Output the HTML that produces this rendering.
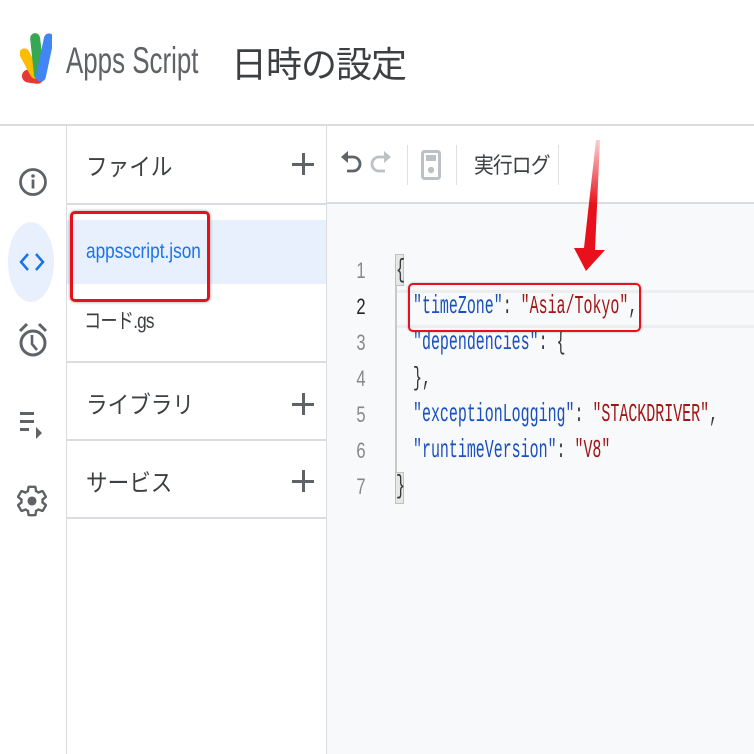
<!DOCTYPE html>
<html><head><meta charset="utf-8"><style>
body{margin:0;width:754px;height:754px;overflow:hidden;background:#fff;font-family:"Liberation Sans","Noto Sans CJK JP",sans-serif;color:#3c4043;position:relative}
.a{position:absolute}
.n{transform-origin:0 0;white-space:nowrap}
.code{font-family:"Liberation Mono",monospace;font-size:26px;transform:scaleX(0.575);transform-origin:0 0;white-space:pre;position:absolute;left:413px}
.k{color:#1a4fbf}.s{color:#a31515}.p{color:#333}
.ln{position:absolute;left:353px;width:16px;text-align:center;font-family:"Liberation Sans",sans-serif;font-size:22px;color:#888;transform:scaleX(0.75)}
.plus{position:absolute;left:292px;width:22px;height:22px}
.plus:before,.plus:after{content:"";position:absolute;background:#5f6368}
.plus:before{left:10px;top:0;width:2.5px;height:22px}
.plus:after{top:10px;left:0;height:2.5px;width:22px}
</style></head><body>
<svg class="a" style="left:20px;top:30px" width="32" height="56" viewBox="0 0 32 56">
<rect x="2" y="40" width="22" height="13" rx="6.5" fill="#e53935" transform="rotate(8 12 46)"/>
<rect x="5" y="17" width="10" height="33" rx="5" fill="#fbbc04" transform="rotate(-28 10 34)"/>
<rect x="12" y="3" width="10" height="47" rx="5" fill="#34a853" transform="rotate(-6 17 26)"/>
<rect x="20" y="3" width="10" height="49" rx="5" fill="#4285f4" transform="rotate(12 25 27)"/>
</svg>
<div class="a n" style="left:66px;top:40px;font-size:37px;color:#5f6368;transform:scaleX(0.7)">Apps Script</div>
<div class="a" style="left:231px;top:36px;font-size:36px;color:#3c4043;letter-spacing:-1px">日時の設定</div>
<div class="a" style="left:0;top:124px;width:754px;height:2px;background:#dadce0"></div>
<div class="a" style="left:66px;top:126px;width:1px;height:628px;background:#dadce0"></div>
<svg class="a" style="left:17px;top:166px" width="32" height="32"><circle cx="16" cy="16" r="12.5" fill="none" stroke="#5f6368" stroke-width="2.8"/><rect x="14.6" y="13.5" width="2.8" height="9" fill="#5f6368"/><circle cx="16" cy="10" r="1.8" fill="#5f6368"/></svg>
<div class="a" style="left:8px;top:222px;width:46px;height:80px;border-radius:23px/40px;background:#e8f0fe"></div>
<svg class="a" style="left:18px;top:250px" width="28" height="24"><path d="M10 4 L3 12 L10 20 M18 4 L25 12 L18 20" fill="none" stroke="#1a73e8" stroke-width="2.5"/></svg>
<svg class="a" style="left:16px;top:320px" width="34" height="42"><circle cx="17" cy="23" r="12" fill="none" stroke="#5f6368" stroke-width="3"/><path d="M16 15 V24 L21 30" fill="none" stroke="#5f6368" stroke-width="2.6"/><path d="M4 11 L11 4 M30 11 L23 4" stroke="#5f6368" stroke-width="3"/></svg>
<svg class="a" style="left:20px;top:410px" width="26" height="32"><rect x="0" y="2" width="14" height="3" fill="#5f6368"/><rect x="0" y="10" width="14" height="3" fill="#5f6368"/><rect x="0" y="18" width="9" height="3" fill="#5f6368"/><path d="M16 17 L22 23 L16 29Z" fill="#5f6368"/></svg>
<svg class="a" style="left:15px;top:482px" width="34" height="38" viewBox="0 0 24 24"><path fill="none" stroke="#5f6368" stroke-width="1.7" d="M19.4 13c.04-.3.1-.7.1-1s-.03-.7-.07-1l2.1-1.65c.2-.15.25-.42.12-.64l-2-3.46a.5.5 0 00-.6-.22l-2.5 1c-.52-.4-1.080-.73-1.7-.98l-.37-2.65A.5.5 0 0014 2h-4a.5.5 0 00-.5.42l-.37 2.65c-.6.25-1.17.59-1.7.98l-2.5-1a.5.5 0 00-.6.22l-2 3.46c-.13.22-.07.49.12.64L4.57 11c-.04.3-.07.65-.07 1s.03.7.07 1l-2.1 1.65c-.2.15-.25.42-.12.64l2 3.46c.12.22.39.3.6.22l2.5-1c.52.4 1.08.73 1.7.98l.37 2.65c.04.24.25.42.5.42h4c.25 0 .46-.18.5-.42l.37-2.65c.6-.25 1.17-.59 1.7-.98l2.5 1c.23.09.48 0 .6-.22l2-3.46c.12-.22.07-.49-.12-.64L19.4 13z"/><circle cx="12" cy="12" r="3.2" fill="#5f6368"/></svg>
<div class="a" style="left:326px;top:126px;width:1px;height:628px;background:#dadce0"></div>
<div class="a n" style="left:86px;top:147px;font-size:24px;color:#3c4043;transform:scaleX(0.9)">ファイル</div>
<div class="plus" style="top:153px"></div>
<div class="a" style="left:67px;top:203px;width:259px;height:2px;background:#dadce0"></div>
<div class="a" style="left:67px;top:220px;width:259px;height:64px;background:#e8f0fe"></div>
<div class="a n" style="left:86px;top:240px;font-size:21px;color:#1a73e8;transform:scaleX(0.82)">appsscript.json</div>
<div class="a" style="left:70px;top:211px;width:134px;height:85px;border:3px solid #e8101a;border-radius:5px;box-shadow:0 0 3px rgba(0,0,0,.4)"></div>
<div class="a n" style="left:84px;top:305px;font-size:21px;color:#3c4043;transform:scaleX(0.82);letter-spacing:-1px">コード.gs</div>
<div class="a" style="left:67px;top:361px;width:259px;height:2px;background:#dadce0"></div>
<div class="a n" style="left:86px;top:385px;font-size:24px;transform:scaleX(0.9)">ライブラリ</div>
<div class="plus" style="top:393px"></div>
<div class="a" style="left:67px;top:439px;width:259px;height:2px;background:#dadce0"></div>
<div class="a n" style="left:86px;top:463px;font-size:24px;transform:scaleX(0.9)">サービス</div>
<div class="plus" style="top:470px"></div>
<div class="a" style="left:67px;top:517px;width:259px;height:2px;background:#dadce0"></div>
<svg class="a" style="left:338px;top:148px" width="56" height="32"><path d="M8 9 H15 A7 7 0 0 1 15 23 H9" fill="none" stroke="#5f6368" stroke-width="2.8"/><path d="M3 9 L10 3 V15Z" fill="#5f6368"/><path d="M48 9 H41 A7 7 0 0 0 41 23 H47" fill="none" stroke="#bdc1c6" stroke-width="2.8"/><path d="M53 9 L46 3 V15Z" fill="#bdc1c6"/></svg>
<div class="a" style="left:407px;top:145px;width:1px;height:40px;background:#e0e0e0"></div>
<svg class="a" style="left:421px;top:150px" width="22" height="32"><rect x="1.5" y="1.5" width="17" height="27" rx="2" fill="none" stroke="#bdc1c6" stroke-width="3"/><circle cx="10" cy="20" r="3.2" fill="#bdc1c6"/><rect x="5" y="5" width="10" height="6" fill="#bdc1c6"/></svg>
<div class="a" style="left:456px;top:145px;width:1px;height:40px;background:#e0e0e0"></div>
<div class="a n" style="left:474px;top:148px;font-size:22px;color:#3c4043;transform:scaleX(0.9);letter-spacing:-1px">実行ログ</div>
<div class="a" style="left:558px;top:145px;width:1px;height:40px;background:#e0e0e0"></div>
<div class="a" style="left:327px;top:202px;width:427px;height:2px;background:#dadce0"></div>
<div class="a" style="left:327px;top:204px;width:427px;height:550px;background:#f8f9fa"></div>
<div class="a" style="left:396px;top:290px;width:358px;height:32px;border-top:3px solid #eceeef;border-bottom:3px solid #eceeef"></div>
<div class="a" style="left:395px;top:254px;width:9px;height:250px;border-left:2px solid #c8c8c8"></div>
<div class="a" style="left:395px;top:254px;width:9px;height:32px;background:#e4e8e4;border:1px solid #c0c0c0;box-sizing:border-box"></div>
<div class="a" style="left:395px;top:472px;width:9px;height:32px;background:#e4e8e4;border:1px solid #c0c0c0;box-sizing:border-box"></div>
<div class="ln" style="top:258px">1</div>
<div class="ln" style="top:294px;color:#222">2</div>
<div class="ln" style="top:330px">3</div>
<div class="ln" style="top:366px">4</div>
<div class="ln" style="top:402px">5</div>
<div class="ln" style="top:438px">6</div>
<div class="ln" style="top:474px">7</div>
<div class="code p" style="left:396px;top:255px">{</div>
<div class="code" style="top:291px"><span class="k">"timeZone"</span><span class="p">: </span><span class="s">"Asia/Tokyo"</span><span class="p">,</span></div>
<div class="code" style="top:327px"><span class="k">"dependencies"</span><span class="p">: {</span></div>
<div class="code p" style="top:363px">},</div>
<div class="code" style="top:399px"><span class="k">"exceptionLogging"</span><span class="p">: </span><span class="s">"STACKDRIVER"</span><span class="p">,</span></div>
<div class="code" style="top:435px"><span class="k">"runtimeVersion"</span><span class="p">: </span><span class="s">"V8"</span></div>
<div class="code p" style="left:396px;top:471px">}</div>
<div class="a" style="left:408px;top:283px;width:229px;height:45px;border:2px solid #e8101a;border-radius:5px;box-shadow:0 0 2px rgba(0,0,0,.3)"></div>
<svg class="a" style="left:570px;top:135px" width="40" height="140"><defs><linearGradient id="g" x1="0" y1="0" x2="0" y2="1"><stop offset="0" stop-color="#e8101a" stop-opacity="0.2"/><stop offset="0.5" stop-color="#e8101a"/></linearGradient></defs><path d="M26 5 L30 5 L25 115 L35 115 L16 136 L4 113 L14 113Z" fill="url(#g)"/></svg>
</body></html>
